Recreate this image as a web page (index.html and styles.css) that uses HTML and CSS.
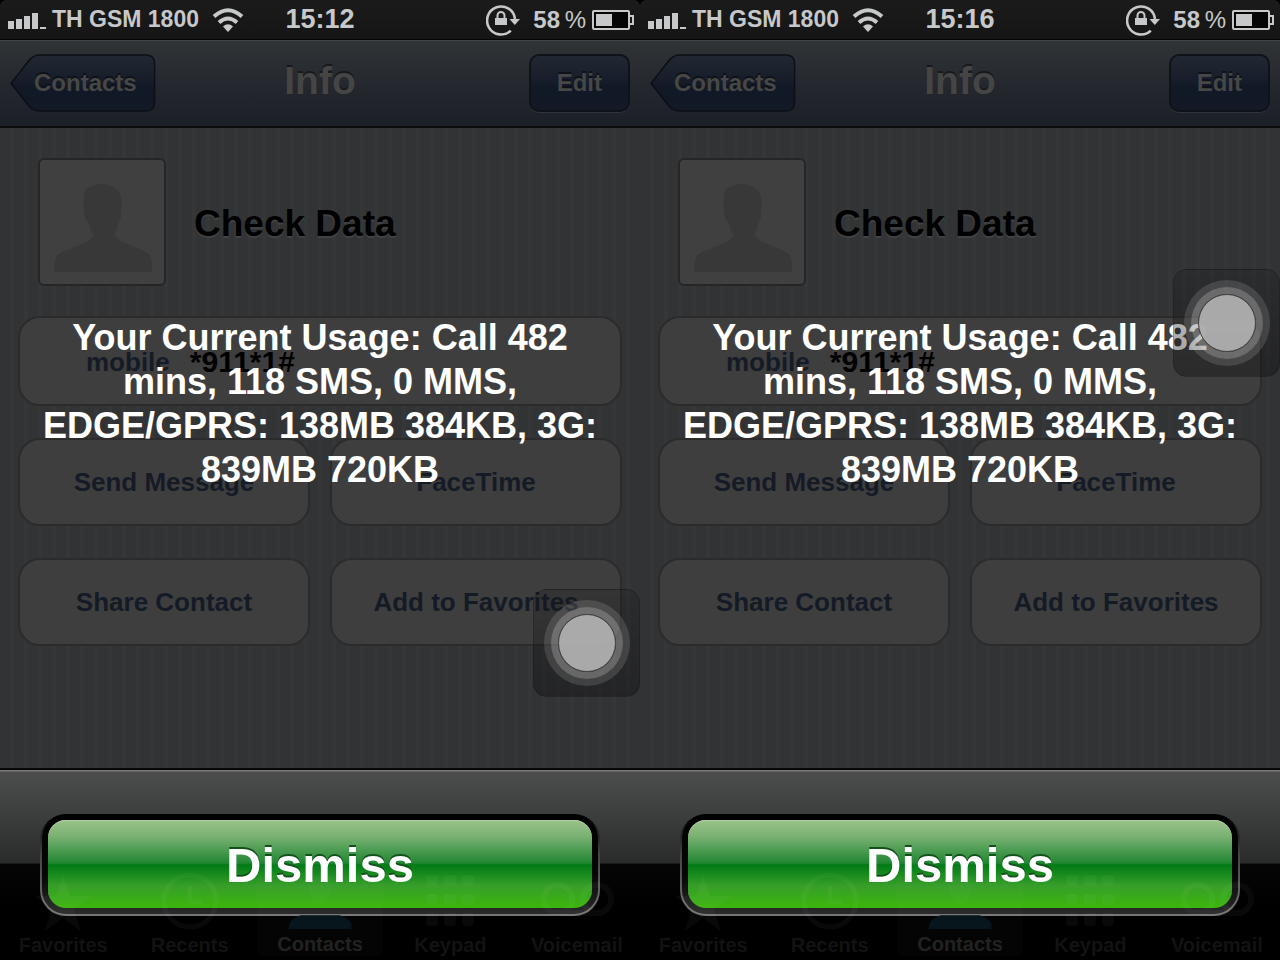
FILE: index.html
```html
<!DOCTYPE html>
<html lang="en">
<head>
  <meta charset="UTF-8">
  <title>Check Data</title>
  <meta name="viewport" content="width=device-width, initial-scale=1">
  <link rel="stylesheet" href="styles.css">
</head>
<body>
  <!-- shared icons -->
  <svg class="sprite" aria-hidden="true">
    <defs>
      <linearGradient id="navbtn" x1="0" y1="0" x2="0" y2="1">
        <stop offset="0" stop-color="#222832"/>
        <stop offset=".5" stop-color="#151c29"/>
        <stop offset=".55" stop-color="#111826"/>
        <stop offset="1" stop-color="#131a26"/>
      </linearGradient>
    </defs>
    <symbol id="i-signal" viewBox="0 0 38 16">
      <path d="M0 8h6v8H0zM8 6h6v10H8zM16 3h6v13h-6zM24 0h6v16h-6zM32 14h6v2h-6z" fill="currentColor"/>
    </symbol>
    <symbol id="i-wifi" viewBox="0 0 32 24">
      <g fill="none" stroke="currentColor" stroke-width="4">
        <path d="M2 8.500Q16-4 30 8.500"/>
        <path d="M7 14.500Q16 6.500 25 14.500"/>
      </g>
      <path d="M11 18.500Q16 14 21 18.500L16 24z" fill="currentColor"/>
    </symbol>
    <symbol id="i-lock" viewBox="0 0 34 32">
      <path d="M24.800 26.600A14 14 0 1 1 29 15" fill="none" stroke="currentColor" stroke-width="2.600"/>
      <path d="M23.500 15H34l-5.200 6z" fill="currentColor"/>
      <path d="M9 14h12v7H9z" fill="currentColor"/>
      <path d="M11.500 15v-3.500a3.500 3.500 0 0 1 7 0V15" fill="none" stroke="currentColor" stroke-width="2"/>
    </symbol>
    <symbol id="i-battery" viewBox="0 0 42 20">
      <rect x="1" y="1" width="36" height="18" rx="1" fill="#050505" stroke="currentColor" stroke-width="2"/>
      <path d="M38 6h3v8h-3" fill="none" stroke="currentColor" stroke-width="2"/>
      <path d="M4 4h16v12H4z" fill="currentColor"/>
    </symbol>
    <symbol id="i-back" viewBox="0 0 146 58">
      <path d="M1 29.500L19 6.500Q23.500 1 30 1H136Q145 1 145 10V48Q145 57 136 57H30Q23.500 57 19 52z" fill="url(#navbtn)" stroke="#0c0f15" stroke-width="1.500"/>
    </symbol>
    <symbol id="i-person" viewBox="0 0 124 124">
      <path d="M14 112C14 104 15 96 20 93L47 82C51 79 53 76 54 75C50 71 50 66 49 63C45 60 44 54 44 51C43 43 44 37 44 34C46 27 49 27 53 26C60 22 70 24 76 29C84 35 81 46 81 51C82 57 79 62 78 63C77 68 77 71 74 74C78 78 79 81 83 82L108 93C112 96 112 104 112 112z" fill="currentColor"/>
    </symbol>
    <symbol id="i-star" viewBox="0 0 60 60">
      <path d="M30 3L37 23H58L41 36L48 58L30 45L12 58L19 36L2 23H23z" fill="currentColor"/>
    </symbol>
    <symbol id="i-clock" viewBox="0 0 60 60">
      <circle cx="30" cy="28" r="26" fill="none" stroke="currentColor" stroke-width="5"/>
      <path d="M30 13v16h13" fill="none" stroke="currentColor" stroke-width="5"/>
    </symbol>
    <symbol id="i-contact" viewBox="0 0 64 60">
      <path d="M20 4H44Q45 18 39 28Q32 38 25 28Q19 18 20 4z" fill="currentColor" opacity=".6"/>
      <path d="M0 57Q0 48 8 45Q10 44 12 43H52Q62 46 64 52V57z" fill="#07161d"/>
    </symbol>
    <symbol id="i-keypad" viewBox="0 0 60 60">
      <g fill="currentColor">
        <rect x="6" y="2" width="12" height="11" rx="3"/><rect x="24" y="2" width="12" height="11" rx="3"/><rect x="42" y="2" width="12" height="11" rx="3"/>
        <rect x="6" y="21" width="12" height="11" rx="3"/><rect x="24" y="21" width="12" height="11" rx="3"/><rect x="42" y="21" width="12" height="11" rx="3"/>
        <rect x="6" y="40" width="12" height="13" rx="3"/><rect x="24" y="40" width="12" height="13" rx="3"/><rect x="42" y="40" width="12" height="13" rx="3"/>
      </g>
    </symbol>
    <symbol id="i-voicemail" viewBox="0 0 78 60">
      <path d="M20 12a14 14 0 1 0 .1 0zM59 12a14 14 0 1 0 .1 0zM20 40H59" fill="none" stroke="currentColor" stroke-width="6"/>
    </symbol>
  </svg>

  <div class="screens">
    <section class="phone">
      <header class="status">
        <div class="status-left">
          <svg class="signal"><use href="#i-signal"/></svg>
          <span class="carrier">TH GSM 1800</span>
          <svg class="wifi"><use href="#i-wifi"/></svg>
        </div>
        <time class="clock">15:12</time>
        <div class="status-right">
          <svg class="lock"><use href="#i-lock"/></svg>
          <span class="percent">58 <span class="sign">%</span></span>
          <svg class="battery"><use href="#i-battery"/></svg>
        </div>
      </header>
      <nav class="navbar">
        <button class="nav-btn back"><svg><use href="#i-back"/></svg><span>Contacts</span></button>
        <h1>Info</h1>
        <button class="nav-btn edit">Edit</button>
      </nav>
      <main class="content">
        <div class="person">
          <svg class="avatar"><use href="#i-person"/></svg>
          <h2>Check Data</h2>
        </div>
        <div class="card number"><span class="label">mobile</span><span class="value">*911*1#</span></div>
        <div class="actions">
          <button class="card">Send Message</button>
          <button class="card">FaceTime</button>
          <button class="card">Share Contact</button>
          <button class="card">Add to Favorites</button>
        </div>
      </main>
      <div class="overlay">
        <p class="message">Your Current Usage: Call 482 mins, 118 SMS, 0 MMS, EDGE/GPRS: 138MB 384KB, 3G: 839MB 720KB</p>
        <div class="sheet">
          <div class="frame"><button class="dismiss">Dismiss</button></div>
        </div>
      </div>
      <nav class="tabs">
        <a href="#"><svg><use href="#i-star"/></svg>Favorites</a>
        <a href="#"><svg><use href="#i-clock"/></svg>Recents</a>
        <a href="#" class="selected"><svg><use href="#i-contact"/></svg>Contacts</a>
        <a href="#"><svg><use href="#i-keypad"/></svg>Keypad</a>
        <a href="#"><svg><use href="#i-voicemail"/></svg>Voicemail</a>
      </nav>
      <button class="touch low" aria-label="AssistiveTouch"><span class="ring"></span></button>
    </section>

    <section class="phone">
      <header class="status">
        <div class="status-left">
          <svg class="signal"><use href="#i-signal"/></svg>
          <span class="carrier">TH GSM 1800</span>
          <svg class="wifi"><use href="#i-wifi"/></svg>
        </div>
        <time class="clock">15:16</time>
        <div class="status-right">
          <svg class="lock"><use href="#i-lock"/></svg>
          <span class="percent">58 <span class="sign">%</span></span>
          <svg class="battery"><use href="#i-battery"/></svg>
        </div>
      </header>
      <nav class="navbar">
        <button class="nav-btn back"><svg><use href="#i-back"/></svg><span>Contacts</span></button>
        <h1>Info</h1>
        <button class="nav-btn edit">Edit</button>
      </nav>
      <main class="content">
        <div class="person">
          <svg class="avatar"><use href="#i-person"/></svg>
          <h2>Check Data</h2>
        </div>
        <div class="card number"><span class="label">mobile</span><span class="value">*911*1#</span></div>
        <div class="actions">
          <button class="card">Send Message</button>
          <button class="card">FaceTime</button>
          <button class="card">Share Contact</button>
          <button class="card">Add to Favorites</button>
        </div>
      </main>
      <div class="overlay">
        <p class="message">Your Current Usage: Call 482 mins, 118 SMS, 0 MMS, EDGE/GPRS: 138MB 384KB, 3G: 839MB 720KB</p>
        <div class="sheet">
          <div class="frame"><button class="dismiss">Dismiss</button></div>
        </div>
      </div>
      <nav class="tabs">
        <a href="#"><svg><use href="#i-star"/></svg>Favorites</a>
        <a href="#"><svg><use href="#i-clock"/></svg>Recents</a>
        <a href="#" class="selected"><svg><use href="#i-contact"/></svg>Contacts</a>
        <a href="#"><svg><use href="#i-keypad"/></svg>Keypad</a>
        <a href="#"><svg><use href="#i-voicemail"/></svg>Voicemail</a>
      </nav>
      <button class="touch high" aria-label="AssistiveTouch"><span class="ring"></span></button>
    </section>
  </div>
</body>
</html>
```

FILE: styles.css
```css
:root {
  --light: #c6c8ca;
  --bg: #323335;
  --stripe: #353638;
  --card: #3e3e3e;
  --line: #2b2b2c;
  --blue: #151b26;
}
* { box-sizing: border-box; }
body {
  margin: 0;
  background: #000;
  font-family: "Liberation Sans", Arial, sans-serif;
  font-weight: 700;
}
button { font: inherit; margin: 0; cursor: pointer; }
.sprite { position: absolute; width: 0; height: 0; }
.screens { display: flex; min-height: 100vh; }
.phone {
  flex: 1;
  min-width: 0;
  display: flex;
  flex-direction: column;
  position: relative;
}

/* Status bar */
.status {
  display: grid;
  grid-template-columns: 1fr auto 1fr;
  align-items: center;
  height: 40px;
  padding: 0 6px;
  background: linear-gradient(#1b1b1b, #141514);
  border-bottom: 1px solid #050505;
  border-radius: 6px 6px 0 0;
  color: var(--light);
}
.status-left, .status-right { display: flex; align-items: center; }
.status-right { justify-content: flex-end; }
.signal { width: 38px; height: 16px; margin: 2px 6px 0 2px; }
.carrier { font-size: 23px; white-space: nowrap; }
.wifi { width: 32px; height: 24px; margin-left: 13px; }
.clock { font-size: 27px; }
.lock { width: 34px; height: 32px; margin-right: 13px; }
.percent { font-size: 24px; }
.percent .sign { font-weight: 400; margin-left: -2px; }
.battery { width: 42px; height: 20px; margin-left: 6px; }

/* Navigation bar */
.navbar {
  display: grid;
  grid-template-columns: 1fr auto 1fr;
  align-items: center;
  padding: 14px 10px;
  background: linear-gradient(#313436, #25282e 50%, #1b1f27);
  border-bottom: 2px solid #0b0c0e;
  box-shadow: inset 0 1px #414446;
  color: #454545;
}
.navbar h1 {
  margin: 0;
  padding-bottom: 4px;
  font-size: 39px;
  line-height: 44px;
  text-shadow: 0 -2px #17191c;
}
.nav-btn {
  height: 58px;
  border: 0;
  background: none;
  color: #474747;
  font-size: 24px;
  text-shadow: 0 -2px #0d1118;
}
.back { position: relative; justify-self: start; padding: 0 19px 0 24px; }
.back svg { position: absolute; left: 0; top: 0; width: 100%; height: 100%; }
.back span { position: relative; }
.edit {
  justify-self: end;
  padding: 0 26px;
  border: 2px solid #0e1219;
  border-radius: 10px;
  background: linear-gradient(#222832, #151c29 50%, #111826 55%, #131a26);
  box-shadow: 0 1px #30343b;
}

/* Contact card */
.content {
  flex: 1;
  padding: 30px 18px;
  background: repeating-linear-gradient(90deg, var(--bg) 0 10px, var(--stripe) 10px 14px);
}
.person { display: flex; align-items: center; gap: 28px; padding: 0 20px; }
.avatar {
  width: 128px;
  height: 128px;
  border: 2px solid #262627;
  border-radius: 6px;
  background: #404040;
  color: #383838;
}
.person h2 {
  margin: 0;
  padding-top: 4px;
  font-size: 37px;
  color: #000;
  text-shadow: 0 2px #404143;
}
.card {
  border: 2px solid var(--line);
  border-radius: 22px;
  background: var(--card);
  color: var(--blue);
  font-size: 26px;
  height: 88px;
}
.number {
  display: flex;
  align-items: center;
  gap: 20px;
  height: 90px;
  margin: 30px 0 32px;
  padding: 2px 66px 0;
}
.number .value { font-size: 30px; color: #000; }
.actions { display: grid; grid-template-columns: 1fr 1fr; gap: 32px 20px; }

/* Tabs */
.tabs {
  display: flex;
  height: 96px;
  position: relative;
  z-index: 2;
}
.tabs a {
  flex: 1 1 0;
  min-width: 0;
  display: flex;
  flex-direction: column;
  align-items: center;
  padding-top: 9px;
  font-size: 20px;
  line-height: 24px;
  color: #121212;
  text-decoration: none;
}
.tabs svg { width: 78px; height: 60px; color: rgba(255, 255, 255, .035); }
.tabs .selected {
  color: #222;
  border: 0 solid transparent;
  border-width: 0 4px 4px;
  border-radius: 10px;
  background: rgba(255, 255, 255, .015) padding-box;
}

/* Usage message */
.overlay {
  position: absolute;
  z-index: 1;
  inset: 40px 0 0;
  display: flex;
  flex-direction: column;
}
.message {
  flex: 1;
  display: flex;
  align-items: center;
  margin: 0;
  padding: 0 32px;
  font-size: 36px;
  line-height: 44px;
  text-align: center;
  color: #fff;
}
.sheet {
  height: 192px;
  padding: 44px 40px 0;
  border-top: 2px solid #080808;
  background: linear-gradient(#777 0 1px, #4c4d4d 2px, #3b3c3c 48px, #2a2b2b 93px, #050505 94px, #000 140px);
}
.frame {
  padding: 6px;
  border: 2px solid transparent;
  border-top: 0;
  border-radius: 26px;
  background: linear-gradient(#000, #060606 60%, #2a2a2a) padding-box, linear-gradient(#000, #444 40%, #777) border-box;
}
.dismiss {
  display: block;
  width: 100%;
  height: 88px;
  padding: 2px 0 0;
  border: 0;
  border-radius: 18px;
  background: linear-gradient(#9bc388, #7bb274 18%, #218733 49%, #007a14 51%, #379f29 75%, #3bb60b);
  box-shadow: inset 0 1px #b0cda5;
  color: #fff;
  font-size: 49px;
  text-shadow: 0 -2px #14501c;
}

/* AssistiveTouch */
.touch {
  position: absolute;
  z-index: 3;
  right: 0;
  width: 107px;
  height: 108px;
  padding: 0;
  border: 1px solid rgba(0, 0, 0, .15);
  border-radius: 14px;
  background: linear-gradient(rgba(25, 25, 25, .25), rgba(15, 15, 15, .4));
}
.touch.low { top: 589px; }
.touch.high { top: 269px; }
.ring {
  display: block;
  width: 58px;
  height: 58px;
  margin: 0 auto;
  border: 1px solid #444;
  border-radius: 50%;
  background: rgba(175, 175, 175, .96);
  box-shadow: 0 0 0 7px rgba(255, 255, 255, .2), 0 0 0 14px rgba(255, 255, 255, .13);
}
```
